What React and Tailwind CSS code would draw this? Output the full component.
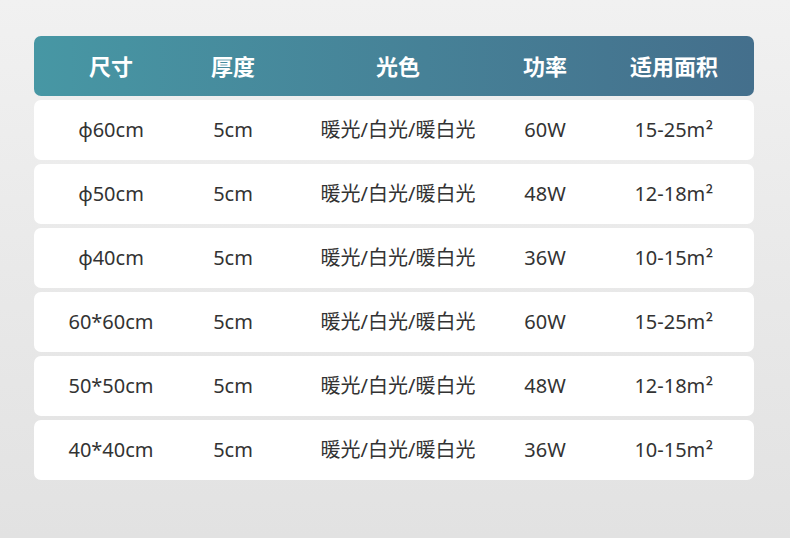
const headers = ['尺寸', '厚度', '光色', '功率', '适用面积'];

const rows = [
  ['ϕ60cm', '5cm', '暖光/白光/暖白光', '60W', '15-25m'],
  ['ϕ50cm', '5cm', '暖光/白光/暖白光', '48W', '12-18m'],
  ['ϕ40cm', '5cm', '暖光/白光/暖白光', '36W', '10-15m'],
  ['60*60cm', '5cm', '暖光/白光/暖白光', '60W', '15-25m'],
  ['50*50cm', '5cm', '暖光/白光/暖白光', '48W', '12-18m'],
  ['40*40cm', '5cm', '暖光/白光/暖白光', '36W', '10-15m'],
];

const grid = 'grid grid-cols-[154px_90px_240px_54px_1fr] items-center';
const cjk = { fontFamily: '"Noto Sans CJK SC", sans-serif' };

function Cells({ items, area }) {
  return items.map((t, i) => (
    <div
      key={i}
      className={`flex justify-center whitespace-nowrap ${i === 4 ? 'pl-[22px]' : ''}`}
    >
      {t}
      {area && i === 4 && <span style={cjk}>²</span>}
    </div>
  ));
}

export default function App() {
  return (
    <div
      className="w-[790px] h-[538px] overflow-hidden bg-gradient-to-b from-[#f1f1f1] via-[#e9e9e9] to-[#e2e2e2] pt-[36px] pl-[34px]"
      style={{ fontFamily: '"Noto Sans", "Noto Sans CJK SC", sans-serif' }}
    >
      <div className="w-[720px] flex flex-col gap-[4px]">
        <div
          className={`${grid} h-[60px] rounded-[7px] bg-gradient-to-r from-[#4797a4] to-[#446f8c] text-white text-[22px] font-bold`}
        >
          <Cells items={headers} />
        </div>
        {rows.map((r, i) => (
          <div
            key={i}
            className={`${grid} h-[60px] rounded-[7px] bg-white text-[#333333] text-[20px]`}
          >
            <Cells items={r} area />
          </div>
        ))}
      </div>
    </div>
  );
}
